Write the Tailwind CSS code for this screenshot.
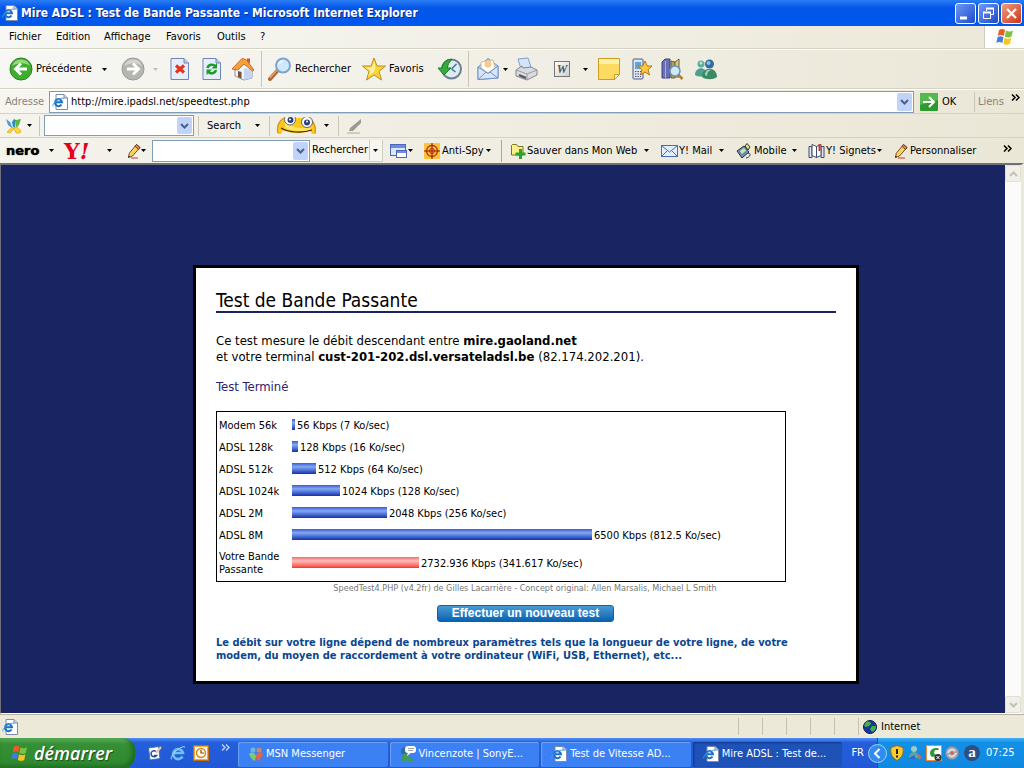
<!DOCTYPE html>
<html lang="fr">
<head>
  <meta charset="utf-8">
  <meta name="viewport" content="width=device-width, initial-scale=1">
  <title>Mire ADSL : Test de Bande Passante</title>
  <script src="https://cdn.jsdelivr.net/npm/@tailwindcss/browser@4"></script>
</head>
<body class="min-h-screen flex flex-col bg-[#ece9d8] font-['DejaVu_Sans_Condensed','DejaVu_Sans',sans-serif] text-[11px] leading-4 text-black whitespace-nowrap overflow-x-hidden">

  <!-- Shared icons -->
  <svg class="hidden">
    <symbol id="caret" viewBox="0 0 5 3"><path d="M0 0h5L2.500 3z" fill="currentColor"/></symbol>
    <symbol id="more" viewBox="0 0 9 7"><path d="M1 0.500l3 3-3 3M5 0.500l3 3-3 3" fill="none" stroke="currentColor" stroke-width="1.500"/></symbol>
    <symbol id="chevron" viewBox="0 0 9 6"><path d="M1 1l3.500 3.500L8 1" fill="none" stroke="currentColor" stroke-width="2"/></symbol>
    <symbol id="ie-page" viewBox="0 0 16 16">
      <path d="M4 .5h8l3.500 3.500v11.500H4z" fill="#fff" stroke="#7c8ba8"/>
      <path d="M12 .5v3.500h3.500" fill="#c9d6ea" stroke="#7c8ba8"/>
      <path d="M9.500 10.500A3.500 3.500 0 1 1 10 8.200H4" fill="none" stroke="#1b6fc8" stroke-width="2"/>
      <path d="M1 12.500c-2-2 7-10 11-8" fill="none" stroke="#4aa3e8" stroke-width="1"/>
    </symbol>
    <symbol id="flag" viewBox="0 0 20 20">
      <path d="M4 3c2-1.500 4-1.500 6 0L8.800 9c-2-1.400-4-1.400-6 0z" fill="#ee5a24"/>
      <path d="M11 3.500c2 1.400 5 1.400 7 0L16.500 9.500c-2 1.200-4.500 1.200-6.700 0z" fill="#7cc142"/>
      <path d="M2.500 10.300c2-1.300 4-1.300 6 0L7.300 16c-2-1.300-4-1.300-6 0z" fill="#3f7fe0"/>
      <path d="M9.500 10.800c2.200 1.300 4.700 1.300 6.700 0L15 16.800c-2 1.200-4.700 1.200-6.700 0z" fill="#fbc51b"/>
    </symbol>
    <symbol id="pencil" viewBox="0 0 14 16">
      <path d="M9.500 1.500l3.500 3-7.500 8.500-4 1.500.8-4.300z" fill="#fbd25c" stroke="#5a2a10" stroke-width=".8"/>
      <path d="M9.500 1.500l3.500 3-1.500 1.800-3.600-3z" fill="#e88a5d" stroke="#5a2a10" stroke-width=".8"/>
      <path d="M1.300 14.600l1.700-.7-1.300-1.200z" fill="#000"/>
      <path d="M4 15h7" stroke="#c33b22"/>
    </symbol>
    <symbol id="people" viewBox="0 0 24 22">
      <circle cx="7" cy="6" r="3.500" fill="#5fae9d"/><circle cx="7" cy="5" r="1.500" fill="#b7e3d8"/>
      <path d="M1 17c0-9 12-9 12 0-3 2-9 2-12 0z" fill="#4f9f90"/>
      <circle cx="15.500" cy="6" r="4.500" fill="#2f6f9f"/><circle cx="14.500" cy="5" r="2" fill="#8fc1dd"/>
      <path d="M8 19c0-11 15-11 15 0-4 3-11 3-15 0z" fill="#3b8a66"/>
      <path d="M11 17c0-5 4-6 6-5-3 1-4 3-4 6z" fill="#a4d3b8"/>
    </symbol>
  </svg>

  <!-- Title bar -->
  <header class="h-[26px] flex items-center pl-0.5 pr-0.5 bg-linear-to-b from-[#2a7df5] via-[#0356e8] via-30% to-[#0058ee] text-white">
    <svg class="size-4 shrink-0"><use href="#ie-page"/></svg>
    <h1 class="ml-[3px] font-bold text-[12px] text-shadow-[1px_1px_0_#0a2a8a]">Mire ADSL : Test de Bande Passante - Microsoft Internet Explorer</h1>
    <div class="ml-auto flex gap-0.5">
      <button aria-label="Réduire" class="size-[21px] rounded-[3px] border border-white bg-linear-to-br from-[#6f97f5] to-[#1c49cc]"><svg viewBox="0 0 19 19"><path d="M4 14h7" stroke="#fff" stroke-width="3"/></svg></button>
      <button aria-label="Restaurer" class="size-[21px] rounded-[3px] border border-white bg-linear-to-br from-[#6f97f5] to-[#1c49cc]"><svg viewBox="0 0 19 19" fill="none" stroke="#fff"><path d="M7.500 7V4.500h7v6H12"/><path d="M7 4.500h8" stroke-width="2"/><path d="M4.500 8.500h7v6h-7z"/><path d="M4 8.500h8" stroke-width="2"/></svg></button>
      <button aria-label="Fermer" class="size-[21px] rounded-[3px] border border-white bg-linear-to-br from-[#f09a80] to-[#c8310c]"><svg viewBox="0 0 19 19"><path d="M5 5l9 9M14 5l-9 9" stroke="#fff" stroke-width="2.200"/></svg></button>
    </div>
  </header>

  <!-- Menu -->
  <nav class="h-[23px] flex items-center pl-[9px] border-b border-[#d5d2c3] bg-linear-to-r from-[#f7f7f4] to-[#ece8d8]">
    <button class="w-[47px] text-left">Fichier</button>
    <button class="w-12 text-left">Edition</button>
    <button class="w-[62px] text-left">Affichage</button>
    <button class="w-[51px] text-left">Favoris</button>
    <button class="w-[43px] text-left">Outils</button>
    <button>?</button>
    <div class="ml-auto w-10 h-full bg-white border-l border-[#cfccbd] flex justify-center items-center"><svg class="size-5"><use href="#flag"/></svg></div>
  </nav>

  <!-- Standard buttons -->
  <div class="h-10 flex items-center pl-[9px] border-t border-white border-b border-b-[#d5d2c3] bg-linear-to-r from-[#f7f7f4] to-[#ebe7d7]">
    <button class="w-28 flex items-center">
      <svg class="size-6" viewBox="0 0 24 24"><circle cx="12" cy="12" r="11" fill="#3fae2f" stroke="#2a7f22"/><path d="M3 9a9.500 9.500 0 0 1 18 0c-6-4-12-3-18 0z" fill="#8fdb76"/><path d="M18 12H7M12 6.500L6.500 12l5.500 5.500" fill="none" stroke="#fff" stroke-width="2.800"/></svg>
      <span class="ml-[3px] w-[66px] text-left">Précédente</span>
      <svg class="w-[5px] h-[3px]"><use href="#caret"/></svg>
    </button>
    <button aria-label="Suivante" class="w-[49px] flex items-center">
      <svg class="size-6" viewBox="0 0 24 24"><circle cx="12" cy="12" r="11" fill="#b5b5b1" stroke="#9a9a96"/><path d="M3 9a9.500 9.500 0 0 1 18 0c-6-4-12-3-18 0z" fill="#d3d3d0"/><path d="M6 12h11M12 6.500l5.500 5.500-5.500 5.500" fill="none" stroke="#fff" stroke-width="2.800"/></svg>
      <svg class="ml-2 w-[5px] h-[3px] text-[#c0beb2]"><use href="#caret"/></svg>
    </button>
    <button aria-label="Arrêter" class="w-8">
      <svg class="w-5 h-6" viewBox="0 0 20 24"><path d="M1 1.500h13l4.500 4.500v16.500H1z" fill="#e6eefb" stroke="#6d86bb"/><path d="M14 1.500V6h4.500" fill="#b9cbe9" stroke="#6d86bb"/><path d="M6 8.500l8 7M14 8.500l-8 7" stroke="#e2351b" stroke-width="3.200"/></svg>
    </button>
    <button aria-label="Actualiser" class="w-[29px]">
      <svg class="w-5 h-6" viewBox="0 0 20 24"><path d="M1 1.500h13l4.500 4.500v16.500H1z" fill="#e6eefb" stroke="#6d86bb"/><path d="M14 1.500V6h4.500" fill="#b9cbe9" stroke="#6d86bb"/><path d="M5.500 11c1-4 6-4 7.500-2M14 13c-1 4-6 4-7.500 2" fill="none" stroke="#1f9a2b" stroke-width="2.500"/><path d="M15 6v5.500h-5.500zM4.500 18v-5.500H10z" fill="#1f9a2b"/></svg>
    </button>
    <button aria-label="Démarrage" class="w-[30px]">
      <svg class="size-6" viewBox="0 0 24 24"><path d="M4 12l9-7 8 7v9l-8 2-9-4z" fill="#f3f4f8" stroke="#8a93ad"/><path d="M13 11l8 2v8l-8 2z" fill="#c6d5f0"/><path d="M16 4V1.500h3V7z" fill="#d8572b"/><path d="M1 12L11 1.500l4 1L23 13l-1.500 1L13 7l-6 6z" fill="#f3a23b" stroke="#cf6a1f"/><path d="M7 14l3.500 1v6.500L7 20z" fill="#7a5330"/></svg>
    </button>
    <div class="w-[7px] h-9 border-l border-[#c9c6b8]"></div>
    <button class="w-[94px] flex items-center">
      <svg class="size-6" viewBox="0 0 24 24"><path d="M2 22l8-9" stroke="#b0622e" stroke-width="4" stroke-linecap="round"/><path d="M2 21l7-8" stroke="#e7a36f" stroke-width="1.500"/><circle cx="15" cy="8.500" r="7" fill="#cfe8fb" stroke="#7fa3cf" stroke-width="2"/><path d="M10.500 8a5 5 0 0 1 6-4.500c-2 1-4 2-6 4.500z" fill="#fff"/></svg>
      <span class="ml-[3px]">Rechercher</span>
    </button>
    <button class="w-[76px] flex items-center">
      <svg class="size-6" viewBox="0 0 24 24"><path d="M12 1l3 8h8.500l-6.500 5.500 2.500 8.500L12 18l-7.500 5L7 14.500.5 9H9z" fill="#fbd43a" stroke="#bd8b1d" stroke-linejoin="round"/><path d="M12 4l1.500 6.500L12 15l-6 4 2.500-5L4 10.500h6z" fill="#fdf0a0"/></svg>
      <span class="ml-[3px]">Favoris</span>
    </button>
    <button aria-label="Historique" class="w-[30px]">
      <svg class="size-6" viewBox="0 0 24 24"><circle cx="13.500" cy="12" r="9.500" fill="#dcebf4" stroke="#71808d" stroke-width="2"/><path d="M13.500 12l5-5M13.500 12l4 3" stroke="#41739b" stroke-width="1.500" fill="none"/><path d="M0 11h4c1-6 5-9 10-8.500C11 5 9.500 8 9.500 11H13l-7 7z" fill="#37ab3a" stroke="#1e7a25"/></svg>
    </button>
    <div class="w-[9px] h-9 border-l border-[#c9c6b8]"></div>
    <button aria-label="Courrier" class="w-[38px] flex items-center">
      <svg class="w-[22px] h-6" viewBox="0 0 22 24"><path d="M1 10L11 1.500 21 9v12L1 22.500z" fill="#b7d0f5" stroke="#6e91c9"/><path d="M4 11V5l12-2 2 8-7 5z" fill="#fff" stroke="#d9b98a"/><circle cx="11" cy="7" r="3.500" fill="#f8c98b"/><path d="M1 10l10 6.500L21 9v12L1 22.500z" fill="#d7e6fb" stroke="#6e91c9"/><path d="M1 22.500L9 15M21 21l-8-6" stroke="#6e91c9"/></svg>
      <svg class="ml-1 w-[5px] h-[3px]"><use href="#caret"/></svg>
    </button>
    <button aria-label="Imprimer" class="w-[39px]">
      <svg class="size-6" viewBox="0 0 24 24"><path d="M3 2l10-1 3 9-10 2z" fill="#d4e5fb" stroke="#7e9fcf"/><path d="M1 13l6-4 1 2 8-1 6 3v5l-10 5-11-4z" fill="#dadbe0" stroke="#85868f"/><path d="M1 13l11 4 10-4M12 17v6" stroke="#9a9ba5" fill="none"/><path d="M4 18l7 3" stroke="#555" stroke-width="2"/></svg>
    </button>
    <button aria-label="Modifier avec Word" class="w-11 flex items-center">
      <span class="size-4 border border-[#777] bg-linear-to-br from-white to-[#cfcfcf] font-['Liberation_Serif',serif] font-bold italic text-[12px] leading-[14px] text-[#555]">W</span>
      <svg class="ml-[13px] w-[5px] h-[3px]"><use href="#caret"/></svg>
    </button>
    <button aria-label="Note" class="w-[34px]">
      <svg class="size-[22px]" viewBox="0 0 22 22"><path d="M.5.500h21v16l-5 5H.5z" fill="#fddb63" stroke="#cf9c20"/><path d="M1 1h20v5H1z" fill="#fff0a8"/><path d="M21.500 16.500h-5v5z" fill="#fff3c2" stroke="#cf9c20"/></svg>
    </button>
    <button aria-label="Mobile" class="w-[29px]">
      <svg class="w-[21px] h-[22px]" viewBox="0 0 21 22"><rect x="1" y="1" width="10" height="20" rx="1" fill="#dfe3ec" stroke="#4f5b86"/><path d="M3 4h6v7H3z" fill="#55a7e6"/><path d="M3 13.500h6M3 16h6M3 18.500h6" stroke="#4f5b86" stroke-dasharray="1.500 1"/><path d="M13 3l2.200 5H20l-4 3.700 1.500 5.300-4.500-3-4.500 3 1.500-5.300L6 8h4.800z" fill="#fbc93c" stroke="#b8741a"/></svg>
    </button>
    <button aria-label="Rechercher dans les livres" class="w-[33px]">
      <svg class="w-[23px] h-[22px]" viewBox="0 0 23 22"><path d="M1 4l3-3h5v19H1z" fill="#6a6fb8" stroke="#3d437f"/><path d="M4.500 3v17" stroke="#a6a9dd"/><path d="M10 3l4 1v16h-4z" fill="#b5a45d" stroke="#6e6130"/><path d="M14 4l4-3v18h-4z" fill="#d9c884" stroke="#6e6130"/><circle cx="14" cy="13" r="5" fill="#cfeafb" stroke="#6c95bd" stroke-width="1.500"/><path d="M17.500 17l4 4" stroke="#b67c30" stroke-width="2.500"/></svg>
    </button>
    <button aria-label="Messenger"><svg class="w-6 h-[22px]"><use href="#people"/></svg></button>
  </div>

  <!-- Address -->
  <form class="h-6 flex items-center pl-[5px] pr-1 border-t border-white bg-linear-to-r from-[#f6f5f0] to-[#ebe7d7]">
    <label for="url" class="w-11 text-[#85837a]">Adresse</label>
    <div class="flex-1 flex items-center h-[22px] border border-[#7f9db9] bg-white pl-0.5 pr-px">
      <svg class="size-4"><use href="#ie-page"/></svg>
      <input id="url" type="text" value="http://mire.ipadsl.net/speedtest.php" class="ml-[3px] flex-1 outline-none">
      <button type="button" aria-label="Liste des adresses" class="w-[15px] h-[18px] grid place-items-center rounded-xs bg-[#c1d3fb] text-[#4d6185]"><svg class="w-[9px] h-1.5"><use href="#chevron"/></svg></button>
    </div>
    <button type="button" class="ml-1.5 w-[54px] flex items-center">
      <svg class="size-[18px]" viewBox="0 0 18 18"><rect width="18" height="18" rx="1" fill="#2c9a2c"/><path d="M0 0h18v7L0 12z" fill="#56b850"/><path d="M3 9h10M9 4l5 5-5 5" fill="none" stroke="#fff" stroke-width="2"/></svg>
      <span class="ml-1">OK</span>
    </button>
    <div class="h-5 border-l border-[#c9c6b8]"></div>
    <span class="ml-[3px] w-[33px] text-[#85837a]">Liens</span>
    <button type="button" aria-label="Plus de liens" class="self-start mt-1"><svg class="w-[9px] h-[7px]"><use href="#more"/></svg></button>
  </form>

  <!-- Search bar -->
  <form class="h-6 flex items-center pl-[5px] border-t border-[#d5d2c3] bg-linear-to-r from-[#f4f3ec] to-[#ebe7d7]">
    <button type="button" aria-label="Messenger Plus" class="w-[34px] flex items-center">
      <svg class="size-[18px]" viewBox="0 0 18 18"><path d="M1 2l4 3 3 7-5-4z" fill="#4a9be0"/><path d="M7 5l2-3 2 1-1 8-2-1z" fill="#2f8fb8"/><path d="M11 3l5-1-2 6-3 3z" fill="#58b947"/><path d="M2 15l5-5 2 2-4 4z" fill="#f6d23a" stroke="#d99a18" stroke-width=".6"/><path d="M9 11l3-1 4 4-1 2h-4z" fill="#fbd93a" stroke="#d99a18" stroke-width=".6"/></svg>
      <svg class="ml-1 w-[5px] h-[3px]"><use href="#caret"/></svg>
    </button>
    <div class="h-5 w-[5px] border-l border-[#c9c6b8]"></div>
    <div class="w-[150px] h-[21px] flex items-center border border-[#7f9db9] bg-white pr-px">
      <input type="text" aria-label="Recherche" class="flex-1 min-w-0 outline-none">
      <button type="button" aria-label="Historique de recherche" class="w-[15px] h-[17px] grid place-items-center rounded-xs bg-[#c1d3fb] text-[#4d6185]"><svg class="w-[9px] h-1.5"><use href="#chevron"/></svg></button>
    </div>
    <div class="ml-1 h-5 w-[9px] border-l border-[#c9c6b8]"></div>
    <button type="button" class="w-[62px] flex items-center"><span class="w-12 text-left">Search</span><svg class="w-[5px] h-[3px]"><use href="#caret"/></svg></button>
    <div class="h-5 w-[7px] border-l border-[#c9c6b8]"></div>
    <button type="button" aria-label="Smiley" class="w-[62px] flex items-center">
      <svg class="w-[41px] h-[18px]" viewBox="0 0 41 18"><path d="M2 17C0 9 4 2 9 1h23c5 1 9 6 8 16h-4l-2-3c-8 3-19 3-27-1l-2 4z" fill="#fbc81e"/><path d="M9 5c8 6 16 7 26 6l-2 2c-8 2-17 1-24-2z" fill="#fde66a"/><path d="M2 16C0 9 4 3 8 1M39 16c1-5-1-11-4-13" stroke="#e08a10" stroke-width="1.200" fill="none"/><circle cx="14" cy="2.500" r="5.500" fill="#fff" stroke="#666"/><circle cx="31" cy="5" r="5.500" fill="#fff" stroke="#666"/><circle cx="14.500" cy="3" r="3" fill="#2b3f7d"/><circle cx="31" cy="5.500" r="3" fill="#2b3f7d"/><circle cx="14" cy="2.500" r="1" fill="#fff"/><circle cx="31" cy="4.500" r="1" fill="#fff"/><path d="M5 11c8 5 22 5 31 2" stroke="#4b2f08" stroke-width="1.200" fill="none"/></svg>
      <svg class="ml-[7px] w-[5px] h-[3px]"><use href="#caret"/></svg>
    </button>
    <div class="h-5 w-2 border-l border-[#c9c6b8]"></div>
    <button type="button" aria-label="Surligner"><svg class="size-4" viewBox="0 0 16 16"><path d="M15 1v4L7 13H3l1-3z" fill="#9b9a94"/><path d="M1 15h13" stroke="#aaa9a2"/></svg></button>
  </form>

  <!-- Yahoo toolbar -->
  <form class="h-[26px] flex items-center pl-1.5 border-t border-[#d5d2c3] bg-linear-to-r from-[#f4f3ec] to-[#ebe7d7]">
    <button type="button" class="w-[58px] flex items-center"><span class="w-[43px] text-left font-['DejaVu_Sans',sans-serif] font-bold text-[13px] text-shadow-[0_0_1px_#000]">nero</span><svg class="w-[5px] h-[3px]"><use href="#caret"/></svg></button>
    <button type="button" class="w-[63px] flex items-center text-[#e3001b]"><span class="w-[43px] text-left font-['DejaVu_Serif',serif] font-bold text-[22px] leading-5">Y<i>!</i></span><svg class="w-[5px] h-[3px] text-black"><use href="#caret"/></svg></button>
    <button type="button" aria-label="Personnaliser la barre" class="w-[25px] flex items-center"><svg class="w-3.5 h-4"><use href="#pencil"/></svg><svg class="w-[5px] h-[3px]"><use href="#caret"/></svg></button>
    <div class="w-[158px] h-[22px] flex items-center border border-[#7f9db9] bg-white pr-px">
      <input type="text" aria-label="Recherche Yahoo" class="flex-1 min-w-0 outline-none">
      <button type="button" aria-label="Recherches récentes" class="w-[15px] h-[18px] grid place-items-center rounded-xs bg-[#c1d3fb] text-[#4d6185]"><svg class="w-[9px] h-1.5"><use href="#chevron"/></svg></button>
    </div>
    <div class="w-[73px] h-[22px] flex items-center border-r border-b border-[#cfccbd] bg-[#f6f5ef]">
      <button class="w-[60px] h-5 pl-0.5 text-left border-r border-[#cfccbd]">Rechercher</button>
      <button type="button" aria-label="Options de recherche" class="px-[3px]"><svg class="w-[5px] h-[3px]"><use href="#caret"/></svg></button>
    </div>
    <button type="button" aria-label="Fenêtres" class="ml-[7px] w-[34px] flex items-center">
      <svg class="w-[17px] h-4" viewBox="0 0 17 16"><rect x=".5" y="1.500" width="15" height="11" fill="#dbe6fb" stroke="#4a67b8"/><path d="M1 3.500h14" stroke="#6d8be0" stroke-width="3"/><rect x="6.500" y="7.500" width="10" height="7" fill="#fff" stroke="#4a67b8"/><path d="M7 9h9" stroke="#6d8be0" stroke-width="2"/></svg>
      <svg class="ml-px w-[5px] h-[3px]"><use href="#caret"/></svg>
    </button>
    <button type="button" class="w-[77px] flex items-center">
      <svg class="size-4" viewBox="0 0 16 16"><rect width="16" height="16" fill="#f9c53d"/><circle cx="8" cy="8" r="5.500" fill="none" stroke="#c32512" stroke-width="1.300"/><circle cx="8" cy="8" r="2.500" fill="none" stroke="#c32512"/><path d="M8 0v16M0 8h16" stroke="#8c180c"/></svg>
      <span class="ml-0.5 w-[44px] text-left">Anti-Spy</span><svg class="w-[5px] h-[3px]"><use href="#caret"/></svg>
    </button>
    <div class="h-[22px] w-[9px] border-l border-[#a9a698]"></div>
    <button type="button" class="w-[151px] flex items-center">
      <svg class="w-4 h-4" viewBox="0 0 16 16"><path d="M1.500 12V2.500l1-1h4l1.500 2h5V12z" fill="#fbf08c" stroke="#7a7420"/><path d="M10.500 6v10M5.500 11h10" stroke="#2da32d" stroke-width="3"/></svg>
      <span class="ml-px w-[117px] text-left">Sauver dans Mon Web</span><svg class="w-[5px] h-[3px]"><use href="#caret"/></svg>
    </button>
    <button type="button" class="w-[75px] flex items-center">
      <svg class="w-[17px] h-3" viewBox="0 0 17 12"><rect x=".5" y=".5" width="16" height="11" fill="#e3effd" stroke="#4a6fb5"/><path d="M1 1l7.500 6L16 1M1 11l5-5M16 11l-5-5" fill="none" stroke="#4a6fb5"/></svg>
      <span class="ml-px w-10 text-left">Y! Mail</span><svg class="w-[5px] h-[3px]"><use href="#caret"/></svg>
    </button>
    <button type="button" class="w-[72px] flex items-center">
      <svg class="size-4" viewBox="0 0 16 16"><path d="M1 8l7-5 5 6-7 6z" fill="#6d8fae" stroke="#25364a"/><path d="M4 8l4-3 2 2.500L6 11z" fill="#cfe8a8"/><path d="M9 3l2-2.500L14 4l-2 3z" fill="#e8e070" stroke="#25364a"/><path d="M12 10c3 0 3 4-2 5" stroke="#25364a" fill="none"/></svg>
      <span class="ml-0.5 w-[38px] text-left">Mobile</span><svg class="w-[5px] h-[3px]"><use href="#caret"/></svg>
    </button>
    <button type="button" class="w-[86px] flex items-center">
      <svg class="w-[17px] h-4" viewBox="0 0 17 16"><path d="M1 3.500h3v11H1zM16 3.500h-3v11h3z" fill="#dfe6f4" stroke="#3d4a6e"/><path d="M4 1.500l4.500 2v11l-4.500-2zM13 1.500l-4.500 2v11l4.500-2z" fill="#fff" stroke="#3d4a6e"/><path d="M11.500 1v7" stroke="#c33b22" stroke-width="2"/></svg>
      <span class="ml-px w-[51px] text-left">Y! Signets</span><svg class="w-[5px] h-[3px]"><use href="#caret"/></svg>
    </button>
    <button type="button" class="flex items-center"><svg class="w-3.5 h-4"><use href="#pencil"/></svg><span class="ml-0.5">Personnaliser</span></button>
    <button type="button" aria-label="Plus d'outils" class="ml-auto mr-3 mb-1"><svg class="w-[9px] h-[7px]"><use href="#more"/></svg></button>
  </form>

  <!-- Page -->
  <div class="flex-1 flex border-t-2 border-[#6f7078] border-l border-r-3 border-r-[#ece9d8] border-b border-b-white bg-white">
    <main class="flex-1 bg-[#192463] pl-48 pt-[100px] pb-7">
      <article class="max-w-[666px] h-[419px] border-3 border-black bg-white px-5 pt-[21px]">
        <h2 class="border-b-2 border-[#192463] text-[19px] leading-[22px]">Test de Bande Passante</h2>
        <p class="mt-5 text-[13px] leading-4">
          Ce test mesure le débit descendant entre <b>mire.gaoland.net</b><br>
          et votre terminal <b>cust-201-202.dsl.versateladsl.be</b> (82.174.202.201).
        </p>
        <p class="mt-3.5 text-[13px] leading-4 text-[#2c2370]">Test Terminé</p>
        <div class="mt-4 w-[570px]">
          <div class="border border-black pt-0.5 pb-px">
          <table class="w-full leading-[13px]">
            <tbody>
              <tr class="h-[22px]"><th class="w-[75px] pl-0.5 text-left font-normal">Modem 56k</th><td><div class="flex items-center gap-0.5"><span class="mb-0.5 h-[11px] bg-linear-to-b from-[#3a58d8] via-[#86a8f2] via-35% to-[#1a2cae]" style="width:3px"></span>56 Kbps (7 Ko/sec)</div></td></tr>
              <tr class="h-[22px]"><th class="pl-0.5 text-left font-normal">ADSL 128k</th><td><div class="flex items-center gap-0.5"><span class="mb-0.5 h-[11px] bg-linear-to-b from-[#3a58d8] via-[#86a8f2] via-35% to-[#1a2cae]" style="width:6px"></span>128 Kbps (16 Ko/sec)</div></td></tr>
              <tr class="h-[22px]"><th class="pl-0.5 text-left font-normal">ADSL 512k</th><td><div class="flex items-center gap-0.5"><span class="mb-0.5 h-[11px] bg-linear-to-b from-[#3a58d8] via-[#86a8f2] via-35% to-[#1a2cae]" style="width:24px"></span>512 Kbps (64 Ko/sec)</div></td></tr>
              <tr class="h-[22px]"><th class="pl-0.5 text-left font-normal">ADSL 1024k</th><td><div class="flex items-center gap-0.5"><span class="mb-0.5 h-[11px] bg-linear-to-b from-[#3a58d8] via-[#86a8f2] via-35% to-[#1a2cae]" style="width:48px"></span>1024 Kbps (128 Ko/sec)</div></td></tr>
              <tr class="h-[22px]"><th class="pl-0.5 text-left font-normal">ADSL 2M</th><td><div class="flex items-center gap-0.5"><span class="mb-0.5 h-[11px] bg-linear-to-b from-[#3a58d8] via-[#86a8f2] via-35% to-[#1a2cae]" style="width:95px"></span>2048 Kbps (256 Ko/sec)</div></td></tr>
              <tr class="h-[22px]"><th class="pl-0.5 text-left font-normal">ADSL 8M</th><td><div class="flex items-center gap-0.5"><span class="mb-0.5 h-[11px] bg-linear-to-b from-[#3a58d8] via-[#86a8f2] via-35% to-[#1a2cae]" style="width:300px"></span>6500 Kbps (812.5 Ko/sec)</div></td></tr>
              <tr class="h-[34px]"><th class="pl-0.5 text-left font-normal">Votre Bande<br>Passante</th><td><div class="flex items-center gap-0.5"><span class="mb-0.5 h-[11px] bg-linear-to-b from-[#f56a6a] via-[#fcbcbc] via-35% to-[#f52c2c]" style="width:127px"></span>2732.936 Kbps (341.617 Ko/sec)</div></td></tr>
            </tbody>
          </table>
          </div>
          <p class="pl-12 text-center text-[9px] leading-3 text-[#777]">SpeedTest4.PHP (v4.2fr) de Gilles Lacarrière - Concept original: Allen Marsalis, Michael L Smith</p>
        </div>
        <button class="block mt-[11px] ml-[221px] w-[177px] h-[17px] rounded-[3px] border border-[#1660a0] bg-linear-to-b from-[#4a9ad4] to-[#0463b0] font-['Liberation_Sans',sans-serif] font-bold text-[12px] leading-[15px] text-white">Effectuer un nouveau test</button>
        <p class="mt-3.5 font-bold leading-[13px] text-[#0a4690]">
          Le débit sur votre ligne dépend de nombreux paramètres tels que la longueur de votre ligne, de votre<br>
          modem, du moyen de raccordement à votre ordinateur (WiFi, USB, Ethernet), etc...
        </p>
      </article>
    </main>
    <div class="w-4 flex flex-col justify-between bg-[#fbfbf9] text-[#c4c2b6]">
      <button disabled aria-label="Défiler vers le haut" class="h-[17px] grid place-items-center border border-[#e2e0d6] rounded-xs bg-[#f0efe8]"><svg class="w-[9px] h-1.5 rotate-180"><use href="#chevron"/></svg></button>
      <button disabled aria-label="Défiler vers le bas" class="h-[17px] grid place-items-center border border-[#e2e0d6] rounded-xs bg-[#f0efe8]"><svg class="w-[9px] h-1.5"><use href="#chevron"/></svg></button>
    </div>
  </div>

  <!-- Status bar -->
  <div class="h-6 flex items-center pl-0.5 border-t border-[#b5b2a3] bg-[#ece9d8]">
    <svg class="size-4"><use href="#ie-page"/></svg>
    <div class="ml-auto flex h-[17px]">
      <div class="w-6 border-l border-[#c5c2b2]"></div>
      <div class="w-6 border-l border-[#c5c2b2]"></div>
      <div class="w-6 border-l border-[#c5c2b2]"></div>
      <div class="w-6 border-l border-[#c5c2b2]"></div>
      <div class="w-6 border-l border-[#c5c2b2]"></div>
      <div class="w-[166px] flex items-center pl-1 border-l border-[#c5c2b2]">
        <svg class="size-3.5" viewBox="0 0 14 14"><circle cx="7" cy="7" r="6.500" fill="#1736a0" stroke="#0b1c50"/><path d="M3 2c3-1 5 0 5 2L6 6 3 7 1 6zM9 6l4 0c0 3-1 5-4 6L7 9z" fill="#3fb53c"/></svg>
        <span class="ml-1">Internet</span>
      </div>
    </div>
  </div>

  <!-- Taskbar -->
  <footer class="h-[30px] flex items-center bg-linear-to-b from-[#4f8ff5] via-[#245edb] via-15% to-[#2158d6] text-white">
    <button class="w-[135px] h-full flex items-center pl-2.5 rounded-r-xl bg-linear-to-b from-[#5cb45c] via-[#358f35] via-20% to-[#2f8a2f] shadow-[inset_-3px_-2px_5px_#1d6a1d]">
      <svg class="size-[19px]"><use href="#flag"/></svg>
      <span class="ml-[5px] font-['Open_Sans','Noto_Sans',sans-serif] font-semibold italic text-[18px] leading-6 text-shadow-[1px_1px_1px_#1b4d1b]">démarrer</span>
    </button>
    <div class="ml-3 w-[91px] flex items-center">
      <button aria-label="Bureau"><svg class="size-4" viewBox="0 0 16 16"><path d="M1.500 3l10-1.500 1.500 12L3 15z" fill="#fff" stroke="#3a74c0"/><path d="M9 6.500a3 3 0 1 0 .5 4H7" fill="none" stroke="#1b4f9c" stroke-width="1.500"/><path d="M9 8l5-6" stroke="#f0c8a0" stroke-width="2"/></svg></button>
      <button aria-label="Internet Explorer" class="ml-[7px]"><svg class="size-4" viewBox="0 0 16 16"><path d="M12.500 11.500A5 5 0 1 1 13 8H4" fill="none" stroke="#6cc0fa" stroke-width="2.600"/><path d="M1.500 14.500C-1 12 10 0 15 2" fill="none" stroke="#a9dcff"/></svg></button>
      <button aria-label="Outlook" class="ml-[7px]"><svg class="size-4" viewBox="0 0 16 16"><rect x=".5" y=".5" width="15" height="15" fill="#f6a72d" stroke="#c66c10"/><rect x="2" y="2" width="12" height="12" fill="#fff"/><circle cx="8" cy="8" r="4.500" fill="#fff8e4" stroke="#d8841c" stroke-width="1.500"/><path d="M8 5V8h3" fill="none" stroke="#8a4a08" stroke-width="1.200"/></svg></button>
      <button aria-label="Plus de raccourcis" class="ml-3 mb-3 text-[#b5d0ff]"><svg class="w-[9px] h-[7px]"><use href="#more"/></svg></button>
    </div>
    <div class="flex-1 min-w-0 grid grid-cols-4 gap-0.5 h-[25px] mt-0.5">
      <button class="flex items-center pl-2.5 rounded-xs bg-[#3c81f3] shadow-[inset_1px_1px_1px_#6ba2f8]"><svg class="size-4" viewBox="0 0 16 16"><circle cx="5" cy="4" r="2.500" fill="#6fb5e0"/><circle cx="11" cy="4" r="2.500" fill="#c98a6a"/><path d="M1 8c3-3 6-1 7 2l-1 5c-3-1-5-4-6-7z" fill="#7fc87a"/><path d="M15 8c-3-3-6-1-7 2l1 5c3-1 5-4 6-7z" fill="#f0603a"/></svg><span class="ml-0.5">MSN Messenger</span></button>
      <button class="flex items-center pl-2.5 rounded-xs bg-[#3c81f3] shadow-[inset_1px_1px_1px_#6ba2f8]"><svg class="size-4" viewBox="0 0 16 16"><circle cx="5" cy="5" r="4" fill="#2f6f9f"/><path d="M1 15c0-6 3-8 6-7 2 1 4 4 8 7z" fill="#3f9a68"/><rect x="5" y="0" width="11" height="7" rx="3" fill="#fff"/><path d="M8 6l-1 4 5-4z" fill="#fff"/><path d="M8 2.500h6M8 4.500h5" stroke="#888" stroke-width=".8"/></svg><span class="ml-[3px]">Vincenzote | SonyE...</span></button>
      <button class="flex items-center pl-2.5 rounded-xs bg-[#3c81f3] shadow-[inset_1px_1px_1px_#6ba2f8]"><svg class="size-4"><use href="#ie-page"/></svg><span class="ml-[3px]">Test de Vitesse AD...</span></button>
      <button class="flex items-center pl-2.5 rounded-xs bg-[#1e52b7] shadow-[inset_1px_1px_2px_#12378a]"><svg class="size-4"><use href="#ie-page"/></svg><span class="ml-[3px]">Mire ADSL : Test de...</span></button>
    </div>
    <button class="ml-[9px]">FR</button>
    <button aria-label="Afficher les icônes" class="ml-1 -mr-2.5 z-10"><svg class="size-[19px]" viewBox="0 0 19 19"><circle cx="9.500" cy="9.500" r="9" fill="#2f8cf0" stroke="#9fd2fb"/><path d="M11.500 5L7 9.500l4.500 4.500" fill="none" stroke="#fff" stroke-width="2"/></svg></button>
    <div class="w-[147px] h-full flex items-center pl-3 gap-[3px] border-l border-[#0c4fb0] bg-linear-to-b from-[#3fb0f5] via-[#1290e8] via-15% to-[#1088e0]">
      <svg class="w-3.5 h-4" viewBox="0 0 14 16"><path d="M7 .5l6 2c1 6-1 10-6 13C2 12.500 0 8.500 1 2.500z" fill="#fbcb2f" stroke="#8c6b20"/><path d="M7 4v5M7 10.500v2" stroke="#222" stroke-width="2"/></svg>
      <svg class="size-4" viewBox="0 0 16 16"><circle cx="7" cy="4" r="3" fill="#9ccac4"/><path d="M2 14c0-9 9-9 10-1z" fill="#5ea79a"/><path d="M1 14l6-4 2 4z" fill="#2a6ad0"/><path d="M11 9l4 3-3 3z" fill="#e8653a"/></svg>
      <svg class="size-4" viewBox="0 0 16 16"><rect width="16" height="16" fill="#fff" stroke="#f08a3a" stroke-width="2"/><path d="M12 3C4 2 2 8 6 12l5-1-3-3 1-3h4z" fill="#2c9a36"/><circle cx="12" cy="12.500" r="3.500" fill="#333"/><path d="M10.500 11l3 3M13.500 11l-3 3" stroke="#fff"/></svg>
      <svg class="size-3.5" viewBox="0 0 14 14"><circle cx="7" cy="7" r="6.500" fill="#a7a9b5" stroke="#7f8190"/><path d="M3 7a4 4 0 0 1 7-2M11 7a4 4 0 0 1-7 2" fill="none" stroke="#e8e8ee" stroke-width="1.500"/><circle cx="7" cy="7" r="1.500" fill="#d65a4a"/></svg>
      <span class="size-4 ml-0.5 rounded-full bg-[#2c4f86] text-center font-['Liberation_Serif',serif] font-bold text-[15px] leading-[14px]">a</span>
      <time class="ml-[3px]">07:25</time>
    </div>
  </footer>
</body>
</html>
